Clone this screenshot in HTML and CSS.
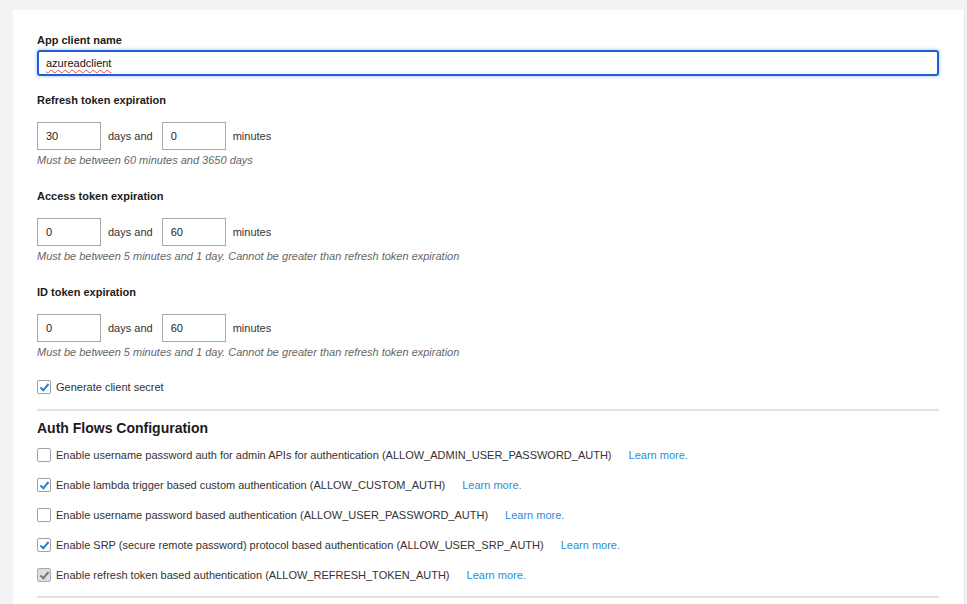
FILE: index.html
```html
<!DOCTYPE html>
<html>
<head>
<meta charset="utf-8">
<link rel="stylesheet" href="styles.css">
</head>
<body>
<div class="card">
  <div class="label first">App client name</div>
  <div class="name-input"><span class="spell">azureadclient</span></div>

  <div class="label">Refresh token expiration</div>
  <div class="dur-row">
    <div class="box">30</div><span class="unit">days and</span>
    <div class="box">0</div><span class="unit">minutes</span>
  </div>
  <div class="hint">Must be between 60 minutes and 3650 days</div>

  <div class="label gap">Access token expiration</div>
  <div class="dur-row">
    <div class="box">0</div><span class="unit">days and</span>
    <div class="box">60</div><span class="unit">minutes</span>
  </div>
  <div class="hint">Must be between 5 minutes and 1 day. Cannot be greater than refresh token expiration</div>

  <div class="label gap">ID token expiration</div>
  <div class="dur-row">
    <div class="box">0</div><span class="unit">days and</span>
    <div class="box">60</div><span class="unit">minutes</span>
  </div>
  <div class="hint">Must be between 5 minutes and 1 day. Cannot be greater than refresh token expiration</div>

  <div class="check-row secret"><span class="cb on"></span><span>Generate client secret</span></div>

  <div class="divider top"></div>
  <h2 class="heading">Auth Flows Configuration</h2>

  <div class="flows">
    <div class="check-row flow"><span class="cb"></span><span>Enable username password auth for admin APIs for authentication (ALLOW_ADMIN_USER_PASSWORD_AUTH)</span><a class="learn">Learn more.</a></div>
    <div class="check-row flow"><span class="cb on"></span><span>Enable lambda trigger based custom authentication (ALLOW_CUSTOM_AUTH)</span><a class="learn">Learn more.</a></div>
    <div class="check-row flow"><span class="cb"></span><span>Enable username password based authentication (ALLOW_USER_PASSWORD_AUTH)</span><a class="learn">Learn more.</a></div>
    <div class="check-row flow"><span class="cb on"></span><span>Enable SRP (secure remote password) protocol based authentication (ALLOW_USER_SRP_AUTH)</span><a class="learn">Learn more.</a></div>
    <div class="check-row flow"><span class="cb on disabled"></span><span>Enable refresh token based authentication (ALLOW_REFRESH_TOKEN_AUTH)</span><a class="learn">Learn more.</a></div>
  </div>
  <div class="divider bottom"></div>
</div>
</body>
</html>
```
FILE: styles.css
```css
html, body {
  margin: 0;
  padding: 0;
  background: #f2f3f4;
  height: 100%;
  overflow: hidden;
}
body {
  font-family: "Liberation Sans", Arial, sans-serif;
  font-size: 11px;
  color: #222;
}
.card {
  margin: 10px 0 0 13px;
  width: 902px;
  min-height: 600px;
  background: #fff;
  padding: 23px 25px 0 24px;
  border-right: 1px solid #e4e6e7;
  box-sizing: content-box;
}
.label {
  font-weight: bold;
  font-size: 11px;
  line-height: 14px;
  color: #1b1b1b;
  margin-top: 17px;
}
.label.first { margin-top: 0; }
.label.gap { margin-top: 22px; }
.name-input {
  margin-top: 3px;
  height: 22px;
  border: 2px solid #1e5fd6;
  border-radius: 3px;
  box-shadow: 0 0 3px 1px rgba(80, 140, 240, 0.35);
  padding-left: 7px;
  display: flex;
  align-items: center;
  font-size: 11px;
  color: #111;
}
.spell {
  text-decoration: underline wavy #e04848;
  text-decoration-thickness: 1px;
  text-underline-offset: 2px;
}
.dur-row {
  margin-top: 15px;
  display: flex;
  align-items: center;
  height: 28px;
}
.box {
  width: 54px;
  height: 26px;
  border: 1px solid #a9a9a9;
  padding-left: 8px;
  display: flex;
  align-items: center;
  color: #222;
}
.unit {
  margin: 0 9px 0 7px;
  color: #333;
}
.hint {
  margin-top: 3px;
  line-height: 14px;
  font-style: italic;
  color: #666;
  font-size: 11px;
}
.check-row {
  display: flex;
  align-items: center;
  color: #333;
}
.secret {
  margin-top: 21px;
  height: 14px;
}
.cb {
  width: 12px;
  height: 12px;
  border: 1px solid #a0a0a0;
  border-radius: 2px;
  background: #fff;
  margin-right: 5px;
  flex: none;
  position: relative;
}
.cb.on::after {
  content: "";
  position: absolute;
  left: 4px;
  top: 1px;
  width: 3px;
  height: 7px;
  border: solid #2a7fd8;
  border-width: 0 2px 2px 0;
  transform: rotate(40deg);
}
.cb.disabled {
  background: #dedede;
  border-color: #aaa;
}
.cb.disabled::after {
  border-color: #777;
}
.divider {
  height: 2px;
  background: #e2e2e2;
}
.divider.top { margin-top: 15px; }
.heading {
  margin: 8px 0 0 0;
  font-size: 14px;
  line-height: 18px;
  font-weight: bold;
  color: #1b1b1b;
}
.flows { margin-top: 3px; }
.flow { height: 30px; }
.learn {
  margin-left: 17px;
  color: #2b8ed8;
}
.divider.bottom { margin-top: 6px; }
```
